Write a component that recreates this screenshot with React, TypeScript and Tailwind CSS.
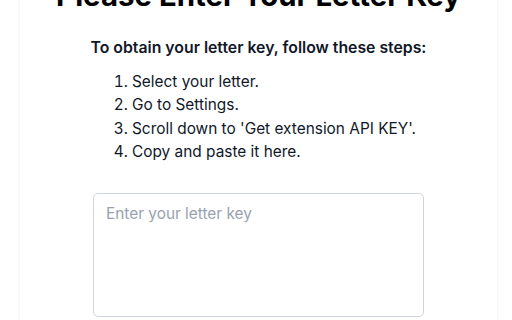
export default function App() {
  return (
    <div className="min-h-screen bg-white overflow-hidden" style={{ fontFamily: 'Inter, "Noto Sans", sans-serif' }}>
      <div className="ml-[20px] w-[477px] bg-white shadow-[0_0_3px_rgba(0,0,0,0.08)] min-h-[320px] -mt-[22px] pb-6 text-gray-900">
        <h1 className="text-center text-[29.4px] font-bold leading-[36px] text-black">
          Please Enter Your Letter Key
        </h1>
        <div className="mt-[22px] text-center text-[15.8px] font-semibold leading-[24px]">
          To obtain your letter key, follow these steps:
        </div>
        <div className="mx-auto mt-[10px] w-[331px]">
          <ol className="list-decimal whitespace-nowrap pl-[39px] text-[15.4px] leading-[23.3px]">
            <li>Select your letter.</li>
            <li>Go to Settings.</li>
            <li>Scroll down to 'Get extension API KEY'.</li>
            <li>Copy and paste it here.</li>
          </ol>
          <textarea
            className="mt-[30px] block h-[124px] w-[331px] resize-none rounded-[5px] border border-[#cfd4dc] px-3 py-2 text-[15.4px] leading-[24px] placeholder:text-gray-400 outline-none"
            placeholder="Enter your letter key"
          />
        </div>
      </div>
    </div>
  );
}
